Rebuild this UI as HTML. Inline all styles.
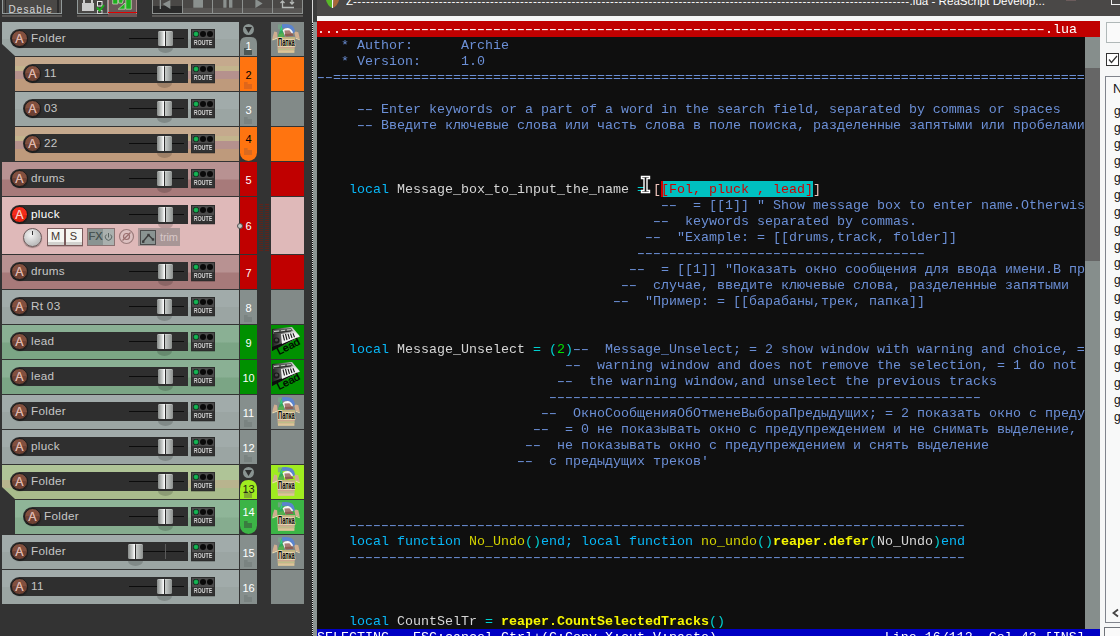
<!DOCTYPE html><html><head><meta charset="utf-8"><title>ReaScript Development Environment</title><style>
*{margin:0;padding:0;box-sizing:border-box}
html,body{width:1120px;height:636px;overflow:hidden;background:#333333}
body{position:relative;font-family:"Liberation Sans",sans-serif}
.a{position:absolute}
#tcp{position:absolute;left:0;top:0;width:317px;height:636px;background:#333333;overflow:hidden}
.row{position:absolute}
.bar{position:absolute;background:#2f2f2f;border-radius:10px 0 0 10px;height:19px}
.ab{position:absolute;width:17px;height:17px;border-radius:50%;background:linear-gradient(#82503f 0,#82503f 50%,#6f4234 50%);border:1px solid #1c1c1c;color:#dfb8ae;font-size:12.4px;line-height:16.4px;text-align:center;text-shadow:0 0 .6px #dfb8ae;box-shadow:0 1px 1px #1a1a1a}
.nm{position:absolute;color:#cacaca;font-size:11.7px;line-height:20.6px;white-space:nowrap;letter-spacing:.3px}
.fl{position:absolute;height:1px;background:#0c0c0c}
.fk{position:absolute;width:15px;height:15px;border-radius:1.5px;background:linear-gradient(90deg,#868a88 0,#a4a8a6 2px,#cdd0ce 4.5px,#fafafa 6.3px,#fafafa 7px,#2c2c2c 7px,#2c2c2c 8px,#c8ccca 8px,#b0b4b2 11px,#8c908e 15px);box-shadow:inset 0 1px 0 rgba(255,255,255,.25)}
.fs{position:absolute;width:15px;height:5px;border-radius:0 0 50% 50%/0 0 100% 100%;background:rgba(0,0,0,.17)}
.rt{position:absolute;width:24px;height:19px;background:linear-gradient(#4b4b4b 0,#4b4b4b 8.5px,#323232 8.5px);border:1px solid #2c2c2c;box-shadow:0 1px 0 rgba(0,0,0,.2)}
.rt b{position:absolute;top:1px;width:6px;height:6px;border-radius:50%;background:#0a0a0a}
.rt b.g{background:radial-gradient(circle,#1cba5a 0,#10a84c 45%,#0a0a0a 72%)}
.rt span{will-change:transform;position:absolute;left:-4px;width:30px;top:8.5px;text-align:center;font-size:8px;line-height:8px;color:#d8d8d8;transform:scaleX(.66);letter-spacing:0;font-weight:bold}
.num{position:absolute;left:237.5px;width:22px;text-align:center;font-size:11px;line-height:12px}
.fi{position:absolute;left:244px;width:8px;height:7px;clip-path:polygon(0 0,45% 0,45% 30%,100% 30%,100% 100%,0 100%)}
.ic{position:absolute;left:271px;width:33px;overflow:hidden}
.ic svg{position:absolute;left:0;top:0}
#ed{position:absolute;left:317px;top:0;width:783px;height:636px;background:#0f0f0f;overflow:hidden}
.ln{position:absolute;left:0;height:16px;will-change:transform;white-space:pre;font-family:"Liberation Mono",monospace;font-size:13.333px;line-height:16px;color:#6b8fd6}
.d{display:inline-block;letter-spacing:-3px;transform:translateX(-2.4px) scaleX(1.6);transform-origin:0 0;white-space:pre}
.k{color:#08b8f8}.w{color:#d6d6d6}.o{color:#00d0d0}.n{color:#00e000}.f{color:#d2d200}.y{color:#f6f600;font-weight:bold}
.tb{position:absolute;top:228px;height:18px}
</style></head><body>
<div id="tcp">
<div class="a" style="left:2px;top:-1px;width:60px;height:15px;background:#4a4846;border:1px solid #929a9a"></div>
<div class="a" style="left:4.5px;top:0;width:1.5px;height:13px;background:#2c2c2c"></div><div class="a" style="left:57px;top:0;width:1.5px;height:13px;background:#2c2c2c"></div>
<div class="a" style="left:8.5px;top:3.5px;color:#d6d6d6;font-size:10px;line-height:12px;letter-spacing:1.1px">Desable</div>
<div class="a" style="left:2px;top:15px;width:60px;height:2px;background:#595755"></div>
<div class="a" style="left:77px;top:-1px;width:31px;height:15px;background:#4a4846;border:1px solid #929a9a"></div>
<div class="a" style="left:82px;top:3px;width:12px;height:8px;background:#cccccc"></div>
<div class="a" style="left:83px;top:0;width:2px;height:3px;background:#cccccc"></div><div class="a" style="left:91px;top:0;width:2px;height:3px;background:#cccccc"></div>
<svg class="a" style="left:96px;top:0" width="10" height="14" viewBox="0 0 10 14"><rect x="1.5" y="1.5" width="4.5" height="4.5" fill="#3a3838" stroke="#ececec"/><rect x="1.5" y="10.5" width="4.5" height="3" fill="none" stroke="#d0d0d0"/><path d="M1 7.5 L3.7 10.5 L8 5" fill="none" stroke="#18b018" stroke-width="1.9"/></svg>
<div class="a" style="left:107.5px;top:0;width:29.5px;height:14px;background:#6a5858;border-left:1px solid #b89090;border-right:1px solid #a88888"></div>
<div class="a" style="left:107.5px;top:14px;width:29.5px;height:3px;background:#6c5454"></div>
<div class="a" style="left:108px;top:11.8px;width:28.5px;height:1.4px;background:#e00000"></div>
<svg class="a" style="left:112px;top:0" width="20" height="10" viewBox="0 0 20 10"><path d="M0.7 -1H5.7V4H0.7Z M6.6 -1H11.5L10.2 3.4L6.6 3Z M13.8 -1H19.3V9.2H13.8Z M13 3V9.2H6.2Z" fill="#1eb01e" stroke="#d4dcc4" stroke-width=".7"/></svg>
<div class="a" style="left:77px;top:15px;width:30.5px;height:2px;background:#595755"></div>
<div class="a" style="left:152px;top:-1px;width:31px;height:15px;background:linear-gradient(#4a4846 0,#4a4846 6px,#2a2a2a 6px);border:1px solid #8c908e"><svg class="a" style="left:0;top:0" width="29" height="13"><rect x="6.7" y="0" width="1.3" height="9" fill="#8a908e"/><path d="M9.6 4 L17.4 0 V9Z" fill="#8a908e"/></svg></div>
<div class="a" style="left:182px;top:-1px;width:31px;height:15px;background:linear-gradient(#4a4846 0,#4a4846 8px,#575553 8px);border:1px solid #8c908e"><svg class="a" style="left:0;top:0" width="29" height="13"><rect x="10.3" y="0" width="9.7" height="7.7" fill="#8a908e"/></svg></div>
<div class="a" style="left:212px;top:-1px;width:31px;height:15px;background:linear-gradient(#4a4846 0,#4a4846 8px,#575553 8px);border:1px solid #8c908e"><svg class="a" style="left:0;top:0" width="29" height="13"><rect x="10.3" y="0" width="3.2" height="7.7" fill="#8a908e"/><rect x="16" y="0" width="3.4" height="7.7" fill="#8a908e"/></svg></div>
<div class="a" style="left:242px;top:-1px;width:31px;height:15px;background:linear-gradient(#4a4846 0,#4a4846 8px,#575553 8px);border:1px solid #8c908e"><svg class="a" style="left:0;top:0" width="29" height="13"><path d="M12.4 0V8L19.6 3.5 L14 0Z" fill="#8a908e"/></svg></div>
<div class="a" style="left:272px;top:-1px;width:31px;height:15px;background:linear-gradient(#4a4846 0,#4a4846 8px,#575553 8px);border:1px solid #8c908e"><svg class="a" style="left:0;top:0" width="29" height="13"><path d="M9.5 1V7.5H21M7.5 3l2-2l2 2M19 0v3.5M17 2l2 2l2-2" fill="none" stroke="#b4b8b6" stroke-width="1.3"/></svg></div>
<div class="a" style="left:152px;top:15px;width:151px;height:2px;background:#595755"></div>
<div class="row" style="left:2px;top:22px;width:237px;height:34px;background:linear-gradient(#a1abaa 0,#a1abaa 17px,#9ba5a3 17px);clip-path:polygon(0 0,100% 0,100% 100%,13px 100%,0 22px);"></div>
<div class="bar" style="left:10px;top:29px;width:178px"></div>
<div class="ab" style="left:11px;top:30px;">A</div>
<div class="nm" style="left:31px;top:28px;color:#c6c6c6">Folder</div>
<div class="fl" style="left:129px;top:38px;width:55px"></div>
<div class="fk" style="left:158px;top:31px"></div>
<div class="fs" style="left:158px;top:48px"></div>
<div class="rt" style="left:191px;top:29px"><b class="g" style="left:1px"></b><b style="left:8px"></b><b style="left:15px"></b><span>ROUTE</span></div>
<svg class="a" style="left:240px;top:22px" width="18" height="34" viewBox="0 0 18 34"><circle cx="8.5" cy="7.5" r="5.5" fill="#8a9492"/><path d="M5 5 H12 L8.5 11Z" fill="#2e2e2e"/><path d="M0 34 V22 Q0 15 6 15 H11 Q17 15 17 22 V34Z" fill="#868f8d"/></svg>
<div class="fi" style="top:48px;background:#4c5856"></div>
<div class="num" style="top:40px;color:#fff">1</div>
<div class="ic" style="top:22px;height:34px;background:#828a88"><svg width="33" height="34" viewBox="0 0 33 34"><rect x="6.9" y="2.3" width="4" height="5" fill="#78a488" opacity=".8"/><path d="M10.9 2.3 Q17.5 1.2 21 3.5 Q24 6 23.9 10.5 L21.4 11.3 Q20.5 6.5 16 5.8 Q13 5.6 11.2 6.4Z" fill="#5b84cf"/><path d="M10.5 3.2 L6.9 14.8 L13.3 14.8 L11.6 8Z" fill="#35a85c"/><path d="M10.6 3.4 L8.8 9.5 L11.4 7.6Z" fill="#2fd088"/><path d="M8 12 L12.5 11 L13.2 14.8 L7 14.8Z" fill="#58b050"/><path d="M11.6 8.2 Q14 5.6 18 6.2 Q21 7.2 22 11 L14.5 14.6Z" fill="#f6f6f6"/><path d="M13.4 8.4 L18.4 8.2 L22.6 13.6 L14.4 14.4Z" fill="#a87c74"/><path d="M13.9 12 L21.4 11.6 L22.6 13.8 L14.4 14.5Z" fill="#8c5c52"/><path d="M3.3 9.4 L6.1 10.2 L6.5 15.2 L1.2 17.6 L1.9 14.2Z" fill="#d0ae90"/><path d="M1.2 17.6 L6.5 15.2 L6.5 16.4 L1.5 18.4Z" fill="#ecdcae"/><path d="M24.7 9.4 L27.3 10.2 L28.8 17 L24.5 15.4 L23.4 10.8Z" fill="#d0ae90"/><path d="M28.8 17.2 L24.5 15.4 L24.5 16.5 L28.6 18.2Z" fill="#ecdcae"/><path d="M6.1 15 H24.2 L23.3 30.8 H6.9Z" fill="#d0b48e"/><rect x="6.5" y="15" width="17.5" height="1.6" fill="#b8b478" opacity=".8"/><rect x="6.8" y="24.6" width="16.8" height="1.6" fill="#c8a090" opacity=".7"/><rect x="6.8" y="26.6" width="16.8" height="1.4" fill="#b4c088" opacity=".7"/><rect x="7" y="28.6" width="16.3" height="2.2" fill="#e0cc9c" opacity=".7"/><text x="15.4" y="23.9" font-family="Liberation Sans, sans-serif" font-size="11" font-weight="bold" text-anchor="middle" fill="#030303" stroke="#ecdfba" stroke-width="1.7" paint-order="stroke" textLength="16.6" lengthAdjust="spacingAndGlyphs">Папка</text></svg></div>
<div class="row" style="left:15px;top:57px;width:224px;height:34px;background:linear-gradient(#c5a98d 0,#c5a98d 9px,#c3b48d 9px,#c3b48d 14px,#b5918d 14px,#b5918d 22px,#be9a7c 22px);"></div>
<div class="bar" style="left:23px;top:64px;width:165px"></div>
<div class="ab" style="left:24px;top:65px;">A</div>
<div class="nm" style="left:44px;top:63px;color:#c6c6c6">11</div>
<div class="fl" style="left:129px;top:73px;width:55px"></div>
<div class="fk" style="left:157px;top:66px"></div>
<div class="fs" style="left:157px;top:83px"></div>
<div class="rt" style="left:191px;top:64px"><b class="g" style="left:1px"></b><b style="left:8px"></b><b style="left:15px"></b><span>ROUTE</span></div>
<div class="a" style="left:240px;top:57px;width:17px;height:34px;background:#ff7410"></div>
<div class="fi" style="top:82px;background:#e0661a"></div>
<div class="num" style="top:69px;color:#000">2</div>
<div class="ic" style="top:57px;height:34px;background:#ff7410"></div>
<div class="row" style="left:15px;top:92px;width:224px;height:34px;background:linear-gradient(#a1abaa 0,#a1abaa 17px,#9ba5a3 17px);"></div>
<div class="bar" style="left:23px;top:99px;width:165px"></div>
<div class="ab" style="left:24px;top:100px;">A</div>
<div class="nm" style="left:44px;top:98px;color:#c6c6c6">03</div>
<div class="fl" style="left:129px;top:108px;width:55px"></div>
<div class="fk" style="left:157px;top:101px"></div>
<div class="fs" style="left:157px;top:118px"></div>
<div class="rt" style="left:191px;top:99px"><b class="g" style="left:1px"></b><b style="left:8px"></b><b style="left:15px"></b><span>ROUTE</span></div>
<div class="a" style="left:240px;top:92px;width:17px;height:34px;background:#868f8d"></div>
<div class="fi" style="top:117px;background:#7a8381"></div>
<div class="num" style="top:104px;color:#fff">3</div>
<div class="ic" style="top:92px;height:34px;background:#828a88"></div>
<div class="row" style="left:15px;top:127px;width:224px;height:34px;background:linear-gradient(#c5a98d 0,#c5a98d 9px,#c3b48d 9px,#c3b48d 14px,#b5918d 14px,#b5918d 22px,#be9a7c 22px);"></div>
<div class="bar" style="left:23px;top:134px;width:165px"></div>
<div class="ab" style="left:24px;top:135px;">A</div>
<div class="nm" style="left:44px;top:133px;color:#c6c6c6">22</div>
<div class="fl" style="left:129px;top:143px;width:55px"></div>
<div class="fk" style="left:157px;top:136px"></div>
<div class="fs" style="left:157px;top:153px"></div>
<div class="rt" style="left:191px;top:134px"><b class="g" style="left:1px"></b><b style="left:8px"></b><b style="left:15px"></b><span>ROUTE</span></div>
<div class="a" style="left:240px;top:127px;width:17px;height:34px;background:#ff7410;border-radius:0 0 9px 9px"></div>
<div class="fi" style="top:148px;background:#d86a20"></div>
<div class="num" style="top:133px;color:#000">4</div>
<div class="ic" style="top:127px;height:34px;background:#ff7410"></div>
<div class="row" style="left:2px;top:162px;width:237px;height:34px;background:linear-gradient(#b89292 0,#b89292 17px,#a77a7a 18px);"></div>
<div class="bar" style="left:10px;top:169px;width:178px"></div>
<div class="ab" style="left:11px;top:170px;">A</div>
<div class="nm" style="left:31px;top:168px;color:#c6c6c6">drums</div>
<div class="fl" style="left:129px;top:178px;width:55px"></div>
<div class="fk" style="left:157px;top:171px"></div>
<div class="fs" style="left:157px;top:188px"></div>
<div class="rt" style="left:191px;top:169px"><b class="g" style="left:1px"></b><b style="left:8px"></b><b style="left:15px"></b><span>ROUTE</span></div>
<div class="a" style="left:240px;top:162px;width:17px;height:34px;background:#c00000"></div>
<div class="num" style="top:174px;color:#fff">5</div>
<div class="ic" style="top:162px;height:34px;background:#c00000"></div>
<div class="row" style="left:2px;top:197px;width:237px;height:57px;background:#dfb9b9;"></div>
<div class="bar" style="left:10px;top:205px;width:178px"></div>
<div class="ab" style="left:11px;top:206px;background:linear-gradient(#f42c1c 0,#f42c1c 50%,#e4220f 50%);color:#ffc8c0;">A</div>
<div class="nm" style="left:31px;top:204px;color:#ffffff">pluck</div>
<div class="fl" style="left:129px;top:214px;width:55px"></div>
<div class="fk" style="left:158px;top:207px"></div>
<div class="fs" style="left:158px;top:224px"></div>
<div class="rt" style="left:191px;top:205px"><b class="g" style="left:1px"></b><b style="left:8px"></b><b style="left:15px"></b><span>ROUTE</span></div>
<div class="a" style="left:240px;top:197px;width:17px;height:57px;background:#c00000"></div>
<div class="num" style="top:220px;color:#fff">6</div>
<div class="ic" style="top:197px;height:57px;background:#dfb9b9"></div>
<div class="row" style="left:2px;top:255px;width:237px;height:34px;background:linear-gradient(#b89292 0,#b89292 17px,#a77a7a 18px);"></div>
<div class="bar" style="left:10px;top:262px;width:178px"></div>
<div class="ab" style="left:11px;top:263px;">A</div>
<div class="nm" style="left:31px;top:261px;color:#c6c6c6">drums</div>
<div class="fl" style="left:129px;top:271px;width:55px"></div>
<div class="fk" style="left:158px;top:264px"></div>
<div class="fs" style="left:158px;top:281px"></div>
<div class="rt" style="left:191px;top:262px"><b class="g" style="left:1px"></b><b style="left:8px"></b><b style="left:15px"></b><span>ROUTE</span></div>
<div class="a" style="left:240px;top:255px;width:17px;height:34px;background:#c00000"></div>
<div class="num" style="top:267px;color:#fff">7</div>
<div class="ic" style="top:255px;height:34px;background:#c00000"></div>
<div class="row" style="left:2px;top:290px;width:237px;height:34px;background:linear-gradient(#a1abaa 0,#a1abaa 17px,#9ba5a3 17px);"></div>
<div class="bar" style="left:10px;top:297px;width:178px"></div>
<div class="ab" style="left:11px;top:298px;">A</div>
<div class="nm" style="left:31px;top:296px;color:#c6c6c6">Rt 03</div>
<div class="fl" style="left:129px;top:306px;width:55px"></div>
<div class="fk" style="left:157px;top:299px"></div>
<div class="fs" style="left:157px;top:316px"></div>
<div class="rt" style="left:191px;top:297px"><b class="g" style="left:1px"></b><b style="left:8px"></b><b style="left:15px"></b><span>ROUTE</span></div>
<div class="a" style="left:240px;top:290px;width:17px;height:34px;background:#868f8d"></div>
<div class="fi" style="top:315px;background:#7a8381"></div>
<div class="num" style="top:302px;color:#fff">8</div>
<div class="ic" style="top:290px;height:34px;background:#828a88"></div>
<div class="row" style="left:2px;top:325px;width:237px;height:34px;background:linear-gradient(#8ab094 0,#8ab094 17px,#7ba585 18px);"></div>
<div class="bar" style="left:10px;top:332px;width:178px"></div>
<div class="ab" style="left:11px;top:333px;">A</div>
<div class="nm" style="left:31px;top:331px;color:#c6c6c6">lead</div>
<div class="fl" style="left:129px;top:341px;width:55px"></div>
<div class="fk" style="left:157px;top:334px"></div>
<div class="fs" style="left:157px;top:351px"></div>
<div class="rt" style="left:191px;top:332px"><b class="g" style="left:1px"></b><b style="left:8px"></b><b style="left:15px"></b><span>ROUTE</span></div>
<div class="a" style="left:240px;top:325px;width:17px;height:34px;background:#009000"></div>
<div class="num" style="top:337px;color:#fff">9</div>
<div class="ic" style="top:325px;height:34px;background:#009000"><svg width="33" height="34" viewBox="0 0 33 34"><defs><linearGradient id="lg" x1="0" y1="0" x2="1" y2="0"><stop offset="0" stop-color="#1c1c1c"/><stop offset=".3" stop-color="#5a5a5a"/><stop offset=".6" stop-color="#b0b0b0"/><stop offset="1" stop-color="#f4f4f4"/></linearGradient></defs><path d="M1 4 L21 2 L29 11.5 L1 26Z" fill="url(#lg)"/><path d="M1 26 L1 22 L29 11.5Z" fill="#0c0c0c"/><path d="M2 5 L20 3 L22 6 L2 9Z" fill="#5a5e5a"/><path d="M3 6.5 L8 6 M10 5.8 L14 5.3 M16 5 L20 4.6" stroke="#c8ccc8" stroke-width="1"/><path d="M3 8 L20 6" stroke="#1a1a1a" stroke-width=".8"/><path d="M10 9 L24 7.5 L28 11.5 L11 19Z" fill="#f2f2f2"/><path d="M12 9.5l1.5 6M14.5 9l1.5 6M17 8.8l1.5 5M19.5 8.5l1.5 4.5M22 8.2l1.5 4" stroke="#1a1a1a" stroke-width="1.1"/><circle cx="5.5" cy="15.5" r="3" fill="#1a1a1a"/><circle cx="5.5" cy="15" r="1.6" fill="#4a4a4a"/><text x="8" y="30" font-family="Liberation Sans, sans-serif" font-size="10" fill="#000" stroke="#000" stroke-width=".25" transform="rotate(-27 8 30)" textLength="24.5" lengthAdjust="spacingAndGlyphs">Lead</text></svg></div>
<div class="row" style="left:2px;top:360px;width:237px;height:34px;background:linear-gradient(#8ab094 0,#8ab094 17px,#7ba585 18px);"></div>
<div class="bar" style="left:10px;top:367px;width:178px"></div>
<div class="ab" style="left:11px;top:368px;">A</div>
<div class="nm" style="left:31px;top:366px;color:#c6c6c6">lead</div>
<div class="fl" style="left:129px;top:376px;width:55px"></div>
<div class="fk" style="left:158px;top:369px"></div>
<div class="fs" style="left:158px;top:386px"></div>
<div class="rt" style="left:191px;top:367px"><b class="g" style="left:1px"></b><b style="left:8px"></b><b style="left:15px"></b><span>ROUTE</span></div>
<div class="a" style="left:240px;top:360px;width:17px;height:34px;background:#009000"></div>
<div class="num" style="top:372px;color:#fff">10</div>
<div class="ic" style="top:360px;height:34px;background:#009000"><svg width="33" height="34" viewBox="0 0 33 34"><defs><linearGradient id="lg" x1="0" y1="0" x2="1" y2="0"><stop offset="0" stop-color="#1c1c1c"/><stop offset=".3" stop-color="#5a5a5a"/><stop offset=".6" stop-color="#b0b0b0"/><stop offset="1" stop-color="#f4f4f4"/></linearGradient></defs><path d="M1 4 L21 2 L29 11.5 L1 26Z" fill="url(#lg)"/><path d="M1 26 L1 22 L29 11.5Z" fill="#0c0c0c"/><path d="M2 5 L20 3 L22 6 L2 9Z" fill="#5a5e5a"/><path d="M3 6.5 L8 6 M10 5.8 L14 5.3 M16 5 L20 4.6" stroke="#c8ccc8" stroke-width="1"/><path d="M3 8 L20 6" stroke="#1a1a1a" stroke-width=".8"/><path d="M10 9 L24 7.5 L28 11.5 L11 19Z" fill="#f2f2f2"/><path d="M12 9.5l1.5 6M14.5 9l1.5 6M17 8.8l1.5 5M19.5 8.5l1.5 4.5M22 8.2l1.5 4" stroke="#1a1a1a" stroke-width="1.1"/><circle cx="5.5" cy="15.5" r="3" fill="#1a1a1a"/><circle cx="5.5" cy="15" r="1.6" fill="#4a4a4a"/><text x="8" y="30" font-family="Liberation Sans, sans-serif" font-size="10" fill="#000" stroke="#000" stroke-width=".25" transform="rotate(-27 8 30)" textLength="24.5" lengthAdjust="spacingAndGlyphs">Lead</text></svg></div>
<div class="row" style="left:2px;top:395px;width:237px;height:34px;background:linear-gradient(#a1abaa 0,#a1abaa 17px,#9ba5a3 17px);"></div>
<div class="bar" style="left:10px;top:402px;width:178px"></div>
<div class="ab" style="left:11px;top:403px;">A</div>
<div class="nm" style="left:31px;top:401px;color:#c6c6c6">Folder</div>
<div class="fl" style="left:129px;top:411px;width:55px"></div>
<div class="fk" style="left:158px;top:404px"></div>
<div class="fs" style="left:158px;top:421px"></div>
<div class="rt" style="left:191px;top:402px"><b class="g" style="left:1px"></b><b style="left:8px"></b><b style="left:15px"></b><span>ROUTE</span></div>
<div class="a" style="left:240px;top:395px;width:17px;height:34px;background:#868f8d"></div>
<div class="fi" style="top:420px;background:#7a8381"></div>
<div class="num" style="top:407px;color:#fff">11</div>
<div class="ic" style="top:395px;height:34px;background:#828a88"><svg width="33" height="34" viewBox="0 0 33 34"><rect x="6.9" y="2.3" width="4" height="5" fill="#78a488" opacity=".8"/><path d="M10.9 2.3 Q17.5 1.2 21 3.5 Q24 6 23.9 10.5 L21.4 11.3 Q20.5 6.5 16 5.8 Q13 5.6 11.2 6.4Z" fill="#5b84cf"/><path d="M10.5 3.2 L6.9 14.8 L13.3 14.8 L11.6 8Z" fill="#35a85c"/><path d="M10.6 3.4 L8.8 9.5 L11.4 7.6Z" fill="#2fd088"/><path d="M8 12 L12.5 11 L13.2 14.8 L7 14.8Z" fill="#58b050"/><path d="M11.6 8.2 Q14 5.6 18 6.2 Q21 7.2 22 11 L14.5 14.6Z" fill="#f6f6f6"/><path d="M13.4 8.4 L18.4 8.2 L22.6 13.6 L14.4 14.4Z" fill="#a87c74"/><path d="M13.9 12 L21.4 11.6 L22.6 13.8 L14.4 14.5Z" fill="#8c5c52"/><path d="M3.3 9.4 L6.1 10.2 L6.5 15.2 L1.2 17.6 L1.9 14.2Z" fill="#d0ae90"/><path d="M1.2 17.6 L6.5 15.2 L6.5 16.4 L1.5 18.4Z" fill="#ecdcae"/><path d="M24.7 9.4 L27.3 10.2 L28.8 17 L24.5 15.4 L23.4 10.8Z" fill="#d0ae90"/><path d="M28.8 17.2 L24.5 15.4 L24.5 16.5 L28.6 18.2Z" fill="#ecdcae"/><path d="M6.1 15 H24.2 L23.3 30.8 H6.9Z" fill="#d0b48e"/><rect x="6.5" y="15" width="17.5" height="1.6" fill="#b8b478" opacity=".8"/><rect x="6.8" y="24.6" width="16.8" height="1.6" fill="#c8a090" opacity=".7"/><rect x="6.8" y="26.6" width="16.8" height="1.4" fill="#b4c088" opacity=".7"/><rect x="7" y="28.6" width="16.3" height="2.2" fill="#e0cc9c" opacity=".7"/><text x="15.4" y="23.9" font-family="Liberation Sans, sans-serif" font-size="11" font-weight="bold" text-anchor="middle" fill="#030303" stroke="#ecdfba" stroke-width="1.7" paint-order="stroke" textLength="16.6" lengthAdjust="spacingAndGlyphs">Папка</text></svg></div>
<div class="row" style="left:2px;top:430px;width:237px;height:34px;background:linear-gradient(#a1abaa 0,#a1abaa 17px,#9ba5a3 17px);"></div>
<div class="bar" style="left:10px;top:437px;width:178px"></div>
<div class="ab" style="left:11px;top:438px;">A</div>
<div class="nm" style="left:31px;top:436px;color:#c6c6c6">pluck</div>
<div class="fl" style="left:129px;top:446px;width:55px"></div>
<div class="fk" style="left:158px;top:439px"></div>
<div class="fs" style="left:158px;top:456px"></div>
<div class="rt" style="left:191px;top:437px"><b class="g" style="left:1px"></b><b style="left:8px"></b><b style="left:15px"></b><span>ROUTE</span></div>
<div class="a" style="left:240px;top:430px;width:17px;height:34px;background:#868f8d"></div>
<div class="fi" style="top:455px;background:#7a8381"></div>
<div class="num" style="top:442px;color:#fff">12</div>
<div class="ic" style="top:430px;height:34px;background:#828a88"></div>
<div class="row" style="left:2px;top:465px;width:237px;height:34px;background:linear-gradient(#afc497 0,#afc497 15px,#b8b48e 15px,#b8b48e 23px,#a9bb8c 23px);clip-path:polygon(0 0,100% 0,100% 100%,13px 100%,0 22px);"></div>
<div class="bar" style="left:10px;top:472px;width:178px"></div>
<div class="ab" style="left:11px;top:473px;">A</div>
<div class="nm" style="left:31px;top:471px;color:#c6c6c6">Folder</div>
<div class="fl" style="left:129px;top:481px;width:55px"></div>
<div class="fk" style="left:158px;top:474px"></div>
<div class="fs" style="left:158px;top:491px"></div>
<div class="rt" style="left:191px;top:472px"><b class="g" style="left:1px"></b><b style="left:8px"></b><b style="left:15px"></b><span>ROUTE</span></div>
<svg class="a" style="left:240px;top:465px" width="18" height="34" viewBox="0 0 18 34"><circle cx="8.5" cy="7.5" r="5.5" fill="#8a9492"/><path d="M5 5 H12 L8.5 11Z" fill="#2e2e2e"/><path d="M0 34 V24 Q0 15 8.5 15 H8.5 Q17 15 17 24 V34Z" fill="#a0ec20"/></svg>
<div class="fi" style="top:491px;background:#84ac30"></div>
<div class="num" style="top:483px;color:#1c2410">13</div>
<div class="ic" style="top:465px;height:34px;background:#a0ec20"><svg width="33" height="34" viewBox="0 0 33 34"><rect x="6.9" y="2.3" width="4" height="5" fill="#78a488" opacity=".8"/><path d="M10.9 2.3 Q17.5 1.2 21 3.5 Q24 6 23.9 10.5 L21.4 11.3 Q20.5 6.5 16 5.8 Q13 5.6 11.2 6.4Z" fill="#5b84cf"/><path d="M10.5 3.2 L6.9 14.8 L13.3 14.8 L11.6 8Z" fill="#35a85c"/><path d="M10.6 3.4 L8.8 9.5 L11.4 7.6Z" fill="#2fd088"/><path d="M8 12 L12.5 11 L13.2 14.8 L7 14.8Z" fill="#58b050"/><path d="M11.6 8.2 Q14 5.6 18 6.2 Q21 7.2 22 11 L14.5 14.6Z" fill="#f6f6f6"/><path d="M13.4 8.4 L18.4 8.2 L22.6 13.6 L14.4 14.4Z" fill="#a87c74"/><path d="M13.9 12 L21.4 11.6 L22.6 13.8 L14.4 14.5Z" fill="#8c5c52"/><path d="M3.3 9.4 L6.1 10.2 L6.5 15.2 L1.2 17.6 L1.9 14.2Z" fill="#d0ae90"/><path d="M1.2 17.6 L6.5 15.2 L6.5 16.4 L1.5 18.4Z" fill="#ecdcae"/><path d="M24.7 9.4 L27.3 10.2 L28.8 17 L24.5 15.4 L23.4 10.8Z" fill="#d0ae90"/><path d="M28.8 17.2 L24.5 15.4 L24.5 16.5 L28.6 18.2Z" fill="#ecdcae"/><path d="M6.1 15 H24.2 L23.3 30.8 H6.9Z" fill="#d0b48e"/><rect x="6.5" y="15" width="17.5" height="1.6" fill="#b8b478" opacity=".8"/><rect x="6.8" y="24.6" width="16.8" height="1.6" fill="#c8a090" opacity=".7"/><rect x="6.8" y="26.6" width="16.8" height="1.4" fill="#b4c088" opacity=".7"/><rect x="7" y="28.6" width="16.3" height="2.2" fill="#e0cc9c" opacity=".7"/><text x="15.4" y="23.9" font-family="Liberation Sans, sans-serif" font-size="11" font-weight="bold" text-anchor="middle" fill="#030303" stroke="#ecdfba" stroke-width="1.7" paint-order="stroke" textLength="16.6" lengthAdjust="spacingAndGlyphs">Папка</text></svg></div>
<div class="row" style="left:15px;top:500px;width:224px;height:34px;background:linear-gradient(#8fb598 0,#8fb598 17px,#86ac8f 18px);"></div>
<div class="bar" style="left:23px;top:507px;width:165px"></div>
<div class="ab" style="left:24px;top:508px;">A</div>
<div class="nm" style="left:44px;top:506px;color:#c6c6c6">Folder</div>
<div class="fl" style="left:129px;top:516px;width:55px"></div>
<div class="fk" style="left:158px;top:509px"></div>
<div class="fs" style="left:158px;top:526px"></div>
<div class="rt" style="left:191px;top:507px"><b class="g" style="left:1px"></b><b style="left:8px"></b><b style="left:15px"></b><span>ROUTE</span></div>
<div class="a" style="left:240px;top:500px;width:17px;height:34px;background:#3cb446;border-radius:0 0 9px 9px"></div>
<div class="fi" style="top:521px;background:#3a7c40"></div>
<div class="num" style="top:506px;color:#fff">14</div>
<div class="ic" style="top:500px;height:34px;background:#3cb446"><svg width="33" height="34" viewBox="0 0 33 34"><rect x="6.9" y="2.3" width="4" height="5" fill="#78a488" opacity=".8"/><path d="M10.9 2.3 Q17.5 1.2 21 3.5 Q24 6 23.9 10.5 L21.4 11.3 Q20.5 6.5 16 5.8 Q13 5.6 11.2 6.4Z" fill="#5b84cf"/><path d="M10.5 3.2 L6.9 14.8 L13.3 14.8 L11.6 8Z" fill="#35a85c"/><path d="M10.6 3.4 L8.8 9.5 L11.4 7.6Z" fill="#2fd088"/><path d="M8 12 L12.5 11 L13.2 14.8 L7 14.8Z" fill="#58b050"/><path d="M11.6 8.2 Q14 5.6 18 6.2 Q21 7.2 22 11 L14.5 14.6Z" fill="#f6f6f6"/><path d="M13.4 8.4 L18.4 8.2 L22.6 13.6 L14.4 14.4Z" fill="#a87c74"/><path d="M13.9 12 L21.4 11.6 L22.6 13.8 L14.4 14.5Z" fill="#8c5c52"/><path d="M3.3 9.4 L6.1 10.2 L6.5 15.2 L1.2 17.6 L1.9 14.2Z" fill="#d0ae90"/><path d="M1.2 17.6 L6.5 15.2 L6.5 16.4 L1.5 18.4Z" fill="#ecdcae"/><path d="M24.7 9.4 L27.3 10.2 L28.8 17 L24.5 15.4 L23.4 10.8Z" fill="#d0ae90"/><path d="M28.8 17.2 L24.5 15.4 L24.5 16.5 L28.6 18.2Z" fill="#ecdcae"/><path d="M6.1 15 H24.2 L23.3 30.8 H6.9Z" fill="#d0b48e"/><rect x="6.5" y="15" width="17.5" height="1.6" fill="#b8b478" opacity=".8"/><rect x="6.8" y="24.6" width="16.8" height="1.6" fill="#c8a090" opacity=".7"/><rect x="6.8" y="26.6" width="16.8" height="1.4" fill="#b4c088" opacity=".7"/><rect x="7" y="28.6" width="16.3" height="2.2" fill="#e0cc9c" opacity=".7"/><text x="15.4" y="23.9" font-family="Liberation Sans, sans-serif" font-size="11" font-weight="bold" text-anchor="middle" fill="#030303" stroke="#ecdfba" stroke-width="1.7" paint-order="stroke" textLength="16.6" lengthAdjust="spacingAndGlyphs">Папка</text></svg></div>
<div class="row" style="left:2px;top:535px;width:237px;height:34px;background:linear-gradient(#a1abaa 0,#a1abaa 17px,#9ba5a3 17px);"></div>
<div class="bar" style="left:10px;top:542px;width:178px"></div>
<div class="ab" style="left:11px;top:543px;">A</div>
<div class="nm" style="left:31px;top:541px;color:#c6c6c6">Folder</div>
<div class="fl" style="left:129px;top:551px;width:55px"></div>
<div class="a" style="left:165px;top:544px;width:1px;height:15px;background:#5a5a5a"></div>
<div class="fk" style="left:128px;top:544px"></div>
<div class="fs" style="left:128px;top:561px"></div>
<div class="rt" style="left:191px;top:542px"><b class="g" style="left:1px"></b><b style="left:8px"></b><b style="left:15px"></b><span>ROUTE</span></div>
<div class="a" style="left:240px;top:535px;width:17px;height:34px;background:#868f8d"></div>
<div class="fi" style="top:560px;background:#7a8381"></div>
<div class="num" style="top:547px;color:#fff">15</div>
<div class="ic" style="top:535px;height:34px;background:#828a88"><svg width="33" height="34" viewBox="0 0 33 34"><rect x="6.9" y="2.3" width="4" height="5" fill="#78a488" opacity=".8"/><path d="M10.9 2.3 Q17.5 1.2 21 3.5 Q24 6 23.9 10.5 L21.4 11.3 Q20.5 6.5 16 5.8 Q13 5.6 11.2 6.4Z" fill="#5b84cf"/><path d="M10.5 3.2 L6.9 14.8 L13.3 14.8 L11.6 8Z" fill="#35a85c"/><path d="M10.6 3.4 L8.8 9.5 L11.4 7.6Z" fill="#2fd088"/><path d="M8 12 L12.5 11 L13.2 14.8 L7 14.8Z" fill="#58b050"/><path d="M11.6 8.2 Q14 5.6 18 6.2 Q21 7.2 22 11 L14.5 14.6Z" fill="#f6f6f6"/><path d="M13.4 8.4 L18.4 8.2 L22.6 13.6 L14.4 14.4Z" fill="#a87c74"/><path d="M13.9 12 L21.4 11.6 L22.6 13.8 L14.4 14.5Z" fill="#8c5c52"/><path d="M3.3 9.4 L6.1 10.2 L6.5 15.2 L1.2 17.6 L1.9 14.2Z" fill="#d0ae90"/><path d="M1.2 17.6 L6.5 15.2 L6.5 16.4 L1.5 18.4Z" fill="#ecdcae"/><path d="M24.7 9.4 L27.3 10.2 L28.8 17 L24.5 15.4 L23.4 10.8Z" fill="#d0ae90"/><path d="M28.8 17.2 L24.5 15.4 L24.5 16.5 L28.6 18.2Z" fill="#ecdcae"/><path d="M6.1 15 H24.2 L23.3 30.8 H6.9Z" fill="#d0b48e"/><rect x="6.5" y="15" width="17.5" height="1.6" fill="#b8b478" opacity=".8"/><rect x="6.8" y="24.6" width="16.8" height="1.6" fill="#c8a090" opacity=".7"/><rect x="6.8" y="26.6" width="16.8" height="1.4" fill="#b4c088" opacity=".7"/><rect x="7" y="28.6" width="16.3" height="2.2" fill="#e0cc9c" opacity=".7"/><text x="15.4" y="23.9" font-family="Liberation Sans, sans-serif" font-size="11" font-weight="bold" text-anchor="middle" fill="#030303" stroke="#ecdfba" stroke-width="1.7" paint-order="stroke" textLength="16.6" lengthAdjust="spacingAndGlyphs">Папка</text></svg></div>
<div class="row" style="left:2px;top:570px;width:237px;height:34px;background:linear-gradient(#a1abaa 0,#a1abaa 17px,#9ba5a3 17px);"></div>
<div class="bar" style="left:10px;top:577px;width:178px"></div>
<div class="ab" style="left:11px;top:578px;">A</div>
<div class="nm" style="left:31px;top:576px;color:#c6c6c6">11</div>
<div class="fl" style="left:129px;top:586px;width:55px"></div>
<div class="fk" style="left:157px;top:579px"></div>
<div class="fs" style="left:157px;top:596px"></div>
<div class="rt" style="left:191px;top:577px"><b class="g" style="left:1px"></b><b style="left:8px"></b><b style="left:15px"></b><span>ROUTE</span></div>
<div class="a" style="left:240px;top:570px;width:17px;height:34px;background:#868f8d"></div>
<div class="fi" style="top:595px;background:#7a8381"></div>
<div class="num" style="top:582px;color:#fff">16</div>
<div class="ic" style="top:570px;height:34px;background:#828a88"></div>
<div class="a" style="left:23px;top:227.5px;width:19px;height:19px;border-radius:50%;background:radial-gradient(circle at 40% 35%,#f4f4f4,#c4c4c4 60%,#a8a8a8);border:1px solid #6a5a5a;box-shadow:0 1px 1px rgba(0,0,0,.35)"></div>
<div class="a" style="left:31.5px;top:231px;width:1.5px;height:4px;background:#333"></div>
<div class="tb" style="left:46.5px;width:18px;background:linear-gradient(#f6f6f2 0,#f6f6f2 13px,#d2d2ce 13px);border:1px solid #7a5c5c;color:#43362e;font-size:11px;line-height:14.5px;text-align:center;box-shadow:0 1px 0 rgba(0,0,0,.15)">M</div>
<div class="tb" style="left:64.5px;width:18px;background:linear-gradient(#f6f6f2 0,#f6f6f2 13px,#d2d2ce 13px);border:1px solid #7a5c5c;color:#43362e;font-size:11px;line-height:14.5px;text-align:center;box-shadow:0 1px 0 rgba(0,0,0,.15)">S</div>
<div class="tb" style="left:87px;width:16px;background:#8a9492;border:1px solid #8a7272;border-right:0;color:#485452;font-size:11px;line-height:15.5px;text-align:center;letter-spacing:0;text-shadow:0 0 .5px #485452">FX</div>
<div class="tb" style="left:103px;width:12px;background:#aab0ae;border:1px solid #8a7272;border-left:0"><svg width="11" height="16" viewBox="0 0 11 16"><path d="M3.4 5.6 A3.2 3.2 0 1 0 7.6 5.6 M5.5 4 V8.5" fill="none" stroke="#5a6462" stroke-width="1"/></svg></div>
<svg class="a" style="left:118px;top:228px" width="17" height="18" viewBox="0 0 17 18"><circle cx="8.5" cy="8.5" r="7" fill="#dcc0c0" stroke="#9c7c7c" stroke-width="1.2"/><circle cx="8.5" cy="8.5" r="3" fill="none" stroke="#9a6e6e" stroke-width="1.2"/><path d="M4.5 12.5 L12.5 4.5" stroke="#9a6e6e" stroke-width="1.2"/></svg>
<div class="tb" style="left:138px;width:42px;background:#a89696"></div>
<div class="a" style="left:140px;top:230px;width:16px;height:15px;background:#8a9492;border:1px solid #4c4c4c"><svg width="14" height="13" viewBox="0 0 14 13"><path d="M2 9.5 L7.5 3 L12 7.5" fill="none" stroke="#3c3c3c" stroke-width="1.3"/><rect x="1" y="8.5" width="2.4" height="2.4" fill="#3c3c3c"/><rect x="6.3" y="1.8" width="2.4" height="2.4" fill="#3c3c3c"/><rect x="10.8" y="6.3" width="2.4" height="2.4" fill="#3c3c3c"/></svg></div>
<div class="a" style="left:160px;top:230px;color:#d8c8c8;font-size:11px;line-height:15px;letter-spacing:-.1px">trim</div>
<div class="a" style="left:236.5px;top:223px;width:6px;height:6px;border-radius:50%;background:#c4c8c6;border:1px solid #505050"></div>
<div class="a" style="left:259px;top:204px;width:4px;height:47px;background:repeating-linear-gradient(#5c241c 0,#5c241c 1px,#333 1px,#333 2px)"></div>
<div class="a" style="left:265px;top:204px;width:4px;height:47px;background:repeating-linear-gradient(#5c241c 0,#5c241c 1px,#333 1px,#333 2px)"></div>
<div class="a" style="left:312px;top:0;width:1px;height:22px;background:#d8d8d8"></div>
<div class="a" style="left:313px;top:0;width:4px;height:22px;background:#3c3c3c"></div>
<div class="a" style="left:311.5px;top:22px;width:2px;height:614px;background:repeating-linear-gradient(#e0e0e0 0,#e0e0e0 1px,#111 1px,#111 2px)"></div>
<div class="a" style="left:313px;top:22px;width:4px;height:614px;background:#8a9492"></div>
</div>
<div id="ed">
<div class="a" style="left:0;top:0;width:803px;height:16px;background:#4a4847"></div>
<div class="a" style="left:0;top:16px;width:803px;height:5px;background:#f6f6f6"></div>
<div class="a" style="left:0;top:21px;width:783px;height:16px;background:#c00000"></div>
<svg class="a" style="left:9px;top:0" width="13" height="9" viewBox="0 0 13 9"><path d="M0 0 H6 L6 8 Q1 5 0 0Z" fill="#58b828"/><path d="M6 0 H7.5 L7 8 L6 8Z" fill="#f4f4f4"/><path d="M7.5 0 H13 Q12 5 7 8Z" fill="#a86838"/></svg>
<div class="a" style="left:29px;top:-7.5px;width:760px;height:16px;color:#fff;font-size:11.6px;line-height:16px;white-space:nowrap;overflow:hidden"><span>Z</span><span style="letter-spacing:.42px">----------------------------------------------------------------------------------------------------------------------------------</span>.lua - ReaScript Develop...</div>
<div class="a" style="left:749px;top:0;width:10px;height:1px;background:#6c5c5c"></div>
<div class="ln" style="left:0px;top:22px;color:#ffffff">...<span class="d" style="width:704px">----------------------------------------------------------------------------------------</span>.lua</div>
<div class="ln" style="left:24px;top:38px;">* Author:      Archie</div>
<div class="ln" style="left:24px;top:54px;">* Version:     1.0</div>
<div class="ln" style="left:0px;top:70px;"><span class="d" style="width:16px">--</span>================================================================================================</div>
<div class="ln" style="left:40px;top:102px;"><span class="d" style="width:16px">--</span> Enter keywords or a part of a word in the search field, separated by commas or spaces</div>
<div class="ln" style="left:40px;top:118px;"><span class="d" style="width:16px">--</span> Введите ключевые слова или часть слова в поле поиска, разделенные запятыми или пробелами</div>
<div class="a" style="left:344px;top:181px;width:152px;height:16px;background:#00c0c0"></div>
<div class="a" style="left:344px;top:181px;width:2px;height:16px;background:#d00000"></div>
<div class="ln" style="left:32px;top:182px;"><span class="k">local</span> <span class="w">Message_box_to_input_the_name</span> <span class="o">=</span> <span style="color:#f0c4bc">[</span><span style="color:#d00000">[Fol, pluck , lead]</span><span style="color:#f0c4bc">]</span></div>
<div class="ln" style="left:344px;top:198px;"><span class="d" style="width:16px">--</span>  = [[1]] " Show message box to enter name.Otherwise</div>
<div class="ln" style="left:336px;top:214px;"><span class="d" style="width:16px">--</span>  keywords separated by commas.</div>
<div class="ln" style="left:328px;top:230px;"><span class="d" style="width:16px">--</span>  "Example: = [[drums,track, folder]]</div>
<div class="ln" style="left:320px;top:246px;"><span class="d" style="width:288px">------------------------------------</span></div>
<div class="ln" style="left:312px;top:262px;"><span class="d" style="width:16px">--</span>  = [[1]] "Показать окно сообщения для ввода имени.В про</div>
<div class="ln" style="left:304px;top:278px;"><span class="d" style="width:16px">--</span>  случае, введите ключевые слова, разделенные запятыми</div>
<div class="ln" style="left:296px;top:294px;"><span class="d" style="width:16px">--</span>  "Пример: = [[барабаны,трек, папка]]</div>
<div class="ln" style="left:32px;top:342px;"><span class="k">local</span> <span class="w">Message_Unselect</span> <span class="o">=</span> <span class="o">(</span><span class="n">2</span><span class="o">)</span><span class="d" style="width:16px">--</span>  Message_Unselect; = 2 show window with warning and choice, = 0</div>
<div class="ln" style="left:248px;top:358px;"><span class="d" style="width:16px">--</span>  warning window and does not remove the selection, = 1 do not</div>
<div class="ln" style="left:240px;top:374px;"><span class="d" style="width:16px">--</span>  the warning window,and unselect the previous tracks</div>
<div class="ln" style="left:232px;top:390px;"><span class="d" style="width:432px">------------------------------------------------------</span></div>
<div class="ln" style="left:224px;top:406px;"><span class="d" style="width:16px">--</span>  ОкноСообщенияОбОтменеВыбораПредыдущих; = 2 показать окно с предуп</div>
<div class="ln" style="left:216px;top:422px;"><span class="d" style="width:16px">--</span>  = 0 не показывать окно с предупреждением и не снимать выделение,</div>
<div class="ln" style="left:208px;top:438px;"><span class="d" style="width:16px">--</span>  не показывать окно с предупреждением и снять выделение</div>
<div class="ln" style="left:200px;top:454px;"><span class="d" style="width:16px">--</span>  с предыдущих треков'</div>
<div class="ln" style="left:32px;top:518px;"><span class="d" style="width:616px">-----------------------------------------------------------------------------</span></div>
<div class="ln" style="left:32px;top:534px;"><span class="k">local function</span> <span class="f">No_Undo</span><span class="o">()</span><span class="k">end;</span> <span class="k">local function</span> <span class="f">no_undo</span><span class="o">()</span><span class="y">reaper.defer</span><span class="o">(</span><span class="w">No_Undo</span><span class="o">)</span><span class="k">end</span></div>
<div class="ln" style="left:32px;top:550px;"><span class="d" style="width:616px">-----------------------------------------------------------------------------</span></div>
<div class="ln" style="left:32px;top:614px;"><span class="k">local</span> <span class="w">CountSelTr</span> <span class="o">=</span> <span class="y">reaper.CountSelectedTracks</span><span class="o">()</span></div>
<svg class="a" style="left:323px;top:175px" width="11" height="19" viewBox="0 0 11 19"><path d="M1.5 1.5 H9.5 V3.5 H7 V15.5 H9.5 V17.5 H1.5 V15.5 H4 V3.5 H1.5Z" fill="#101010" stroke="#ffffff" stroke-width="1.4"/></svg>
<div class="a" style="left:0;top:629px;width:783px;height:7px;background:#0000c4;overflow:hidden"><div class="ln" style="top:1px;color:#fff">SELECTING - ESC:cancel Ctrl+(C:Copy X:cut V:paste)                     Line 16/112, Col 43 [INS]</div></div>
<div class="a" style="left:768px;top:37px;width:15px;height:592px;background:#868e8c"></div>
<div class="a" style="left:768px;top:68px;width:15px;height:193px;background:#666666"></div>
</div>
<div class="a" style="left:1100px;top:16px;width:20px;height:620px;background:#f6f7f7;overflow:hidden;font-size:12px;color:#111">
<div class="a" style="left:6px;top:6px;width:20px;height:21px;background:#fafafa;border:1px solid #b0b8b8"></div>
<div class="a" style="left:6px;top:37px;width:13px;height:13px;background:#fff;border:1px solid #333"></div>
<svg class="a" style="left:6px;top:37px" width="14" height="13" viewBox="0 0 14 13"><path d="M3 6.5 L5.5 9.5 L11 3" fill="none" stroke="#333" stroke-width="1.2"/></svg>
<div class="a" style="left:5px;top:60px;width:20px;height:547px;background:#f8f9f9;border:1px solid #80848c"></div>
<div class="a" style="left:13px;top:65px;line-height:16px;font-size:13px">N</div>
<div class="a" style="left:14px;top:87px;line-height:16px;font-size:12px">g</div>
<div class="a" style="left:14px;top:104px;line-height:16px;font-size:12px">g</div>
<div class="a" style="left:14px;top:120px;line-height:16px;font-size:12px">g</div>
<div class="a" style="left:14px;top:137px;line-height:16px;font-size:12px">g</div>
<div class="a" style="left:14px;top:154px;line-height:16px;font-size:12px">g</div>
<div class="a" style="left:14px;top:171px;line-height:16px;font-size:12px">g</div>
<div class="a" style="left:14px;top:188px;line-height:16px;font-size:12px">g</div>
<div class="a" style="left:14px;top:205px;line-height:16px;font-size:12px">g</div>
<div class="a" style="left:14px;top:222px;line-height:16px;font-size:12px">g</div>
<div class="a" style="left:14px;top:239px;line-height:16px;font-size:12px">g</div>
<div class="a" style="left:14px;top:256px;line-height:16px;font-size:12px">g</div>
<div class="a" style="left:14px;top:273px;line-height:16px;font-size:12px">g</div>
<div class="a" style="left:14px;top:290px;line-height:16px;font-size:12px">g</div>
<div class="a" style="left:14px;top:307px;line-height:16px;font-size:12px">g</div>
<div class="a" style="left:14px;top:324px;line-height:16px;font-size:12px">g</div>
<div class="a" style="left:14px;top:341px;line-height:16px;font-size:12px">g</div>
<div class="a" style="left:14px;top:359px;line-height:16px;font-size:12px">g</div>
<div class="a" style="left:14px;top:376px;line-height:16px;font-size:12px">g</div>
<div class="a" style="left:14px;top:393px;line-height:16px;font-size:12px">g</div>
<svg class="a" style="left:11px;top:592px" width="9" height="10" viewBox="0 0 9 10"><path d="M7 1.5 L2.5 5 L7 8.5" fill="none" stroke="#444" stroke-width="1.8"/></svg>
<div class="a" style="left:4px;top:610.5px;width:20px;height:20px;background:#fafafa;border:1px solid #70747a"></div>
</div>
<div class="a" style="left:1100px;top:0;width:20px;height:16px;background:#4a4847"></div>
<div class="a" style="left:1111px;top:-2px;width:12px;height:7px;border:1.5px solid #f0f0f0"></div>
</body></html>
